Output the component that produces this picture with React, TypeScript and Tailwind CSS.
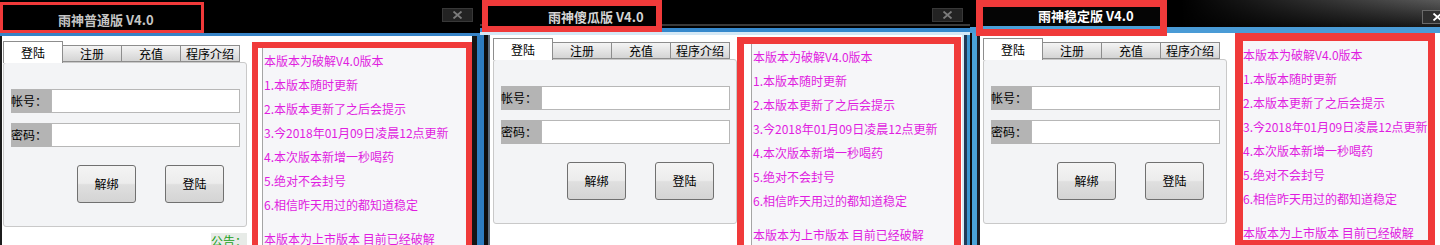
const notes = [
  "本版本为破解V4.0版本",
  "1.本版本随时更新",
  "2.本版本更新了之后会提示",
  "3.今2018年01月09日凌晨12点更新",
  "4.本次版本新增一秒喝药",
  "5.绝对不会封号",
  "6.相信昨天用过的都知道稳定",
];

const CloseBtn = ({ className, bright }: { className: string; bright?: boolean }) => (
  <div
    className={
      "w-[31px] h-[14px] shrink-0 flex items-center justify-center border " +
      (bright ? "bg-[#2e2e2e] border-[#6a6a6a] " : "bg-[#232323] border-[#383838] ") +
      className
    }
  >
    <svg width="11" height="8" viewBox="0 0 11 8">
      <path d="M1.5 0.5 L9.5 7.5 M9.5 0.5 L1.5 7.5" stroke={bright ? "#ffffff" : "#7c7c7c"} strokeWidth="1.8" />
    </svg>
  </div>
);

const Tabs = () => (
  <div className="relative z-10 flex items-end h-[22px] -mb-px text-[12px] text-black">
    <div className="w-[60px] h-[22px] bg-white border border-b-0 border-[#8d8d8d] flex items-center justify-center">
      登陆
    </div>
    {["注册", "充值", "程序介绍"].map((t) => (
      <div
        key={t}
        className="w-[59px] h-[17px] mb-px border border-l-0 border-[#8d8d8d] bg-gradient-to-b from-[#f4f4f4] to-[#d4d4d4] flex items-center justify-center"
      >
        {t}
      </div>
    ))}
  </div>
);

const Field = ({ label, className }: { label: string; className?: string }) => (
  <div className={"flex h-[24px] " + (className ?? "")}>
    <div className="w-[40px] bg-[#b4b4b4] flex items-center text-[12px] text-black">{label}</div>
    <div className="w-[189px] border border-[#b7b7b7] bg-white" />
  </div>
);

const Btn = ({ text, className }: { text: string; className: string }) => (
  <div
    className={
      "w-[59px] h-[38px] rounded-[3px] border border-[#707070] bg-[linear-gradient(to_bottom,#f4f4f4_0%,#ececec_48%,#dfdfdf_52%,#d4d4d4_100%)] flex items-center justify-center text-[12px] text-black " +
      className
    }
  >
    {text}
  </div>
);

const LoginPanel = () => (
  <div className="h-[165px] border border-[#c9c9c9] rounded-[3px] bg-[#f3f4f6] pt-[26px] pl-[7px]">
    <Field label="帐号：" />
    <Field label="密码：" className="mt-[10px]" />
    <div className="flex mt-[18px]">
      <Btn text="解绑" className="ml-[66px]" />
      <Btn text="登陆" className="ml-[29px]" />
    </div>
  </div>
);

const Notes = ({ className, innerClass }: { className: string; innerClass: string }) => (
  <div className={"h-[215px] shrink-0 border-[#f03a3a] bg-white flex " + className}>
    <div className={"flex-1 bg-[#f6f6f9] text-[12px] leading-[24px] text-[#e01ce0] whitespace-nowrap " + innerClass}>
      {notes.map((n) => (
        <div key={n}>{n}</div>
      ))}
      <div className="mt-[10px]">本版本为上市版本 目前已经破解</div>
    </div>
  </div>
);

export default function App() {
  return (
    <div className="w-[1440px] h-[245px] overflow-hidden flex bg-black font-['Noto_Sans_CJK_SC',sans-serif]">
      {/* 普通版 */}
      <div className="w-[480px] h-full flex flex-col overflow-hidden shrink-0">
        <div className="h-[33px] shrink-0 bg-black flex items-start">
          <div className="mt-[2px] w-[204px] h-[31px] shrink-0 border-[3px] border-[#f03a3a] bg-black pl-[55px] pt-[8px] text-[13px] leading-[13px] font-bold text-[#c6c6c6] whitespace-nowrap">
            雨神普通版 V4.0
          </div>
          <CloseBtn className="ml-auto mr-[7px] mt-[8px]" />
        </div>
        <div className="h-[3px] shrink-0 bg-[#3683c6]" />
        <div className="flex flex-1 min-h-0">
          <div className="w-[2px] bg-[#1c1c1c]" />
          <div className="flex-1 bg-white flex items-start">
            <div className="ml-px mt-[5px] w-[244px] shrink-0">
              <Tabs />
              <LoginPanel />
              <div className="mt-[6px] flex justify-end">
                <span className="bg-[#e7ebe7] text-[#18a018] text-[12px] leading-[16px]">公告：</span>
              </div>
            </div>
            <Notes className="ml-[5px] mt-[6px] w-[220px] border-[6px]" innerClass="ml-[4px] border-l border-[#a5a5a5] pl-px pt-px" />
          </div>
          <div className="w-[5px] bg-[#151515]" />
          <div className="w-[3px] bg-[#2f7fc2]" />
        </div>
      </div>

      {/* 傻瓜版 */}
      <div className="w-[490px] h-full flex flex-col overflow-hidden shrink-0">
        <div className="h-[32px] shrink-0 bg-[linear-gradient(to_bottom,#000_24px,#3a3a3a_24px,#3a3a3a_26px,#000_26px,#000_28px,#3588cc_28px)] flex items-start">
          <div className="ml-[2px] w-[180px] h-[32px] shrink-0 border-[6px] border-[#f03a3a] bg-black pl-[60px] pt-[4px] text-[13px] leading-[13px] font-bold text-[#d4d4d4] whitespace-nowrap">
            雨神傻瓜版 V4.0
          </div>
          <CloseBtn className="ml-auto mr-[7px] mt-[8px]" />
        </div>
        <div className="h-[3px] shrink-0 bg-[#d4e8f6]" />
        <div className="flex flex-1 min-h-0">
          <div className="w-[4px] bg-[#2d7cc0]" />
          <div className="w-[4px] bg-[#0d0d0d]" />
          <div className="w-[2px] bg-[#5a6a7a]" />
          <div className="flex-1 bg-white flex items-start">
            <div className="ml-[3px] mt-[3px] w-[244px] shrink-0">
              <Tabs />
              <LoginPanel />
            </div>
            <Notes className="mt-[2px] w-[224px] border-[7px]" innerClass="ml-[7px] border-l border-[#a5a5a5] pl-px pt-px" />
          </div>
          <div className="w-[2px] bg-[#d6e9f5]" />
          <div className="w-[3px] bg-[#1f3a57]" />
          <div className="w-[3px] bg-[#3b95d0]" />
        </div>
      </div>

      {/* 稳定版 */}
      <div className="w-[470px] h-full flex flex-col overflow-hidden shrink-0">
        <div className="h-[33px] shrink-0 bg-[linear-gradient(to_bottom,transparent_27px,#4a9bd6_27px),linear-gradient(to_right,#000_45%,transparent),linear-gradient(to_bottom,#5a5a5a,#0a0a0a)] flex items-start">
          <div className="relative z-10 ml-[6px] w-[191px] h-[36px] shrink-0 border-[7px] border-[#f03a3a] bg-[linear-gradient(to_bottom,#050505_19px,#4aa0d8_19px)] pl-[55px] pt-[2px] text-[13px] leading-[13px] font-bold text-white whitespace-nowrap">
            雨神稳定版 V4.0
          </div>
          <CloseBtn bright className="ml-auto -mr-[13px] mt-[10px]" />
        </div>
        <div className="flex flex-1 min-h-0">
          <div className="w-[2px] bg-[#0c0c0c]" />
          <div className="w-[5px] bg-[#4aa3d8]" />
          <div className="w-[3px] bg-[#1a1f26]" />
          <div className="flex-1 bg-white flex items-start">
            <div className="ml-[3px] mt-[5px] w-[244px] shrink-0">
              <Tabs />
              <LoginPanel />
            </div>
            <Notes className="ml-[8px] w-[200px] border-[8px]" innerClass="pt-[2px]" />
          </div>
        </div>
      </div>
    </div>
  );
}
